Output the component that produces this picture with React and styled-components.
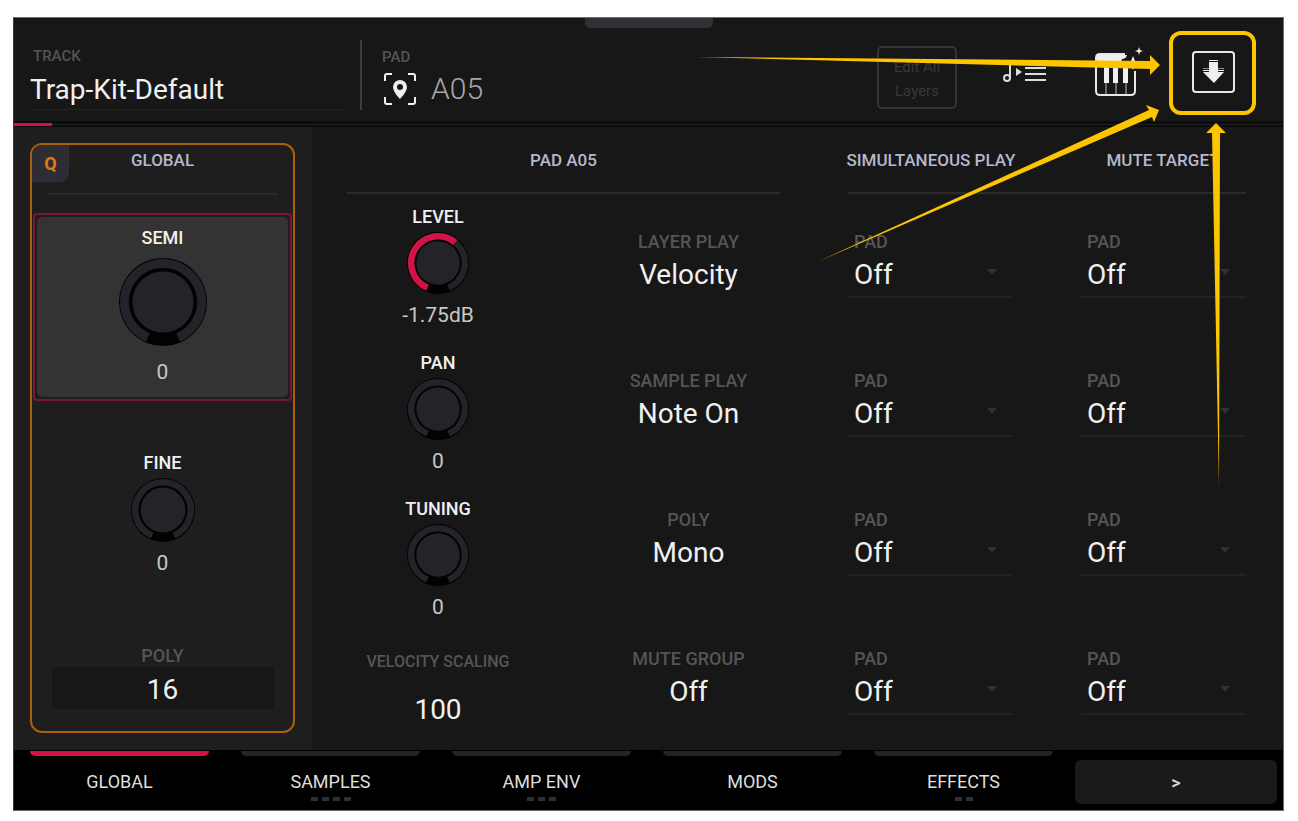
import React, { useState } from 'react';
import styled, { createGlobalStyle } from 'styled-components';

const GlobalStyle = createGlobalStyle`
    * {
        box-sizing: border-box;
    }
    body {
        margin: 0;
        background-color: #ffffff;
        font-family: Roboto, sans-serif;
        color: #f0f0f0;
    }
    button, input, select {
        font-family: inherit;
    }
    h2 {
        margin: 0;
    }
`

const Page = styled.div`
    padding: 17px 14px 10px 13px;
`

const Screen = styled.div`
    position: relative;
    border: 1px solid #6e6e6e;
    border-left-color: #3c3c3c;
    background-color: #171717;
    overflow: hidden;
`

const Handle = styled.div`
    position: absolute;
    top: 0;
    left: 50%;
    width: 128px;
    height: 10px;
    margin-left: -64px;
    background-color: #313036;
    border-radius: 0 0 5px 5px;
`

const Header = styled.header`
    height: 103px;
    padding: 22px 48px 11px 16px;
    display: flex;
    align-items: stretch;
`

const TrackField = styled.label`
    width: 316px;
    padding-top: 7px;
    display: flex;
    flex-direction: column;
    border-bottom: 1px solid #232323;
`

const Caption = styled.span`
    font-size: 15px;
    line-height: 18px;
    font-weight: 500;
    color: #555555;
    padding-left: ${props => props.$indent ? '3px' : '0'};
`

const TrackInput = styled.input`
    width: 100%;
    height: 42px;
    padding: 6px 0 0;
    border: 0;
    outline: none;
    background: transparent;
    color: #f0f0f0;
    font-size: 28px;
`

const PadField = styled.div`
    margin-left: 14px;
    padding: 7px 0 0 20px;
    border-left: 2px solid #3d3d3d;
`

const PadName = styled.div`
    display: flex;
    align-items: center;
    gap: 14px;
    padding: 5px 0 0 1px;
    font-size: 30px;
    line-height: 36px;
    font-weight: 300;
    color: #a8a8a8;
`

const Tools = styled.div`
    margin-left: auto;
    padding-bottom: 5px;
    display: flex;
    align-items: center;
`

const EditButton = styled.button`
    width: 80px;
    height: 63px;
    margin: 9px 46px 0 0;
    padding: 4px 14px 0;
    border: 2px solid #343434;
    border-radius: 5px;
    background: transparent;
    color: #383838;
    font-size: 15px;
    line-height: 24px;
`

const IconButton = styled.button`
    height: 54px;
    margin-left: ${props => props.$gap || 0}px;
    padding: 0;
    border: 0;
    background: transparent;
    display: flex;
    align-items: center;
`

const Progress = styled.div`
    height: 6px;
    padding: 2px 0 1px;
    background: linear-gradient(#0c0c0c 0 3px, #212121 3px 4px, #0c0c0c 4px);
`

const ProgressBar = styled.div`
    width: 3%;
    height: 3px;
    background-color: #d80f45;
`

const Body = styled.div`
    display: flex;
`

const Side = styled.aside`
    width: 298px;
    padding: 16px 17px 17px 16px;
    background-color: #1e1e1e;
`

const GlobalBox = styled.section`
    position: relative;
    height: 590px;
    padding: 0 1px;
    border: 2px solid #ad5e0a;
    border-radius: 12px;
    display: flex;
    flex-direction: column;
    align-items: center;
`

const QBadge = styled.span`
    position: absolute;
    top: 0;
    left: 0;
    width: 37px;
    height: 37px;
    border-radius: 9px 0 9px 0;
    background-color: #2d2d33;
    color: #e07a10;
    font-size: 18px;
    line-height: 38px;
    font-weight: 700;
    text-align: center;
`

const Title = styled.h2`
    height: 50px;
    padding-top: 5px;
    border-bottom: 2px solid #2b2b2b;
    font-size: 17px;
    line-height: 22px;
    font-weight: 500;
    color: #b6b8cc;
    text-align: center;
`

const SideTitle = styled(Title)`
    width: 230px;
    padding-top: 4px;
`

const Selected = styled.div`
    align-self: stretch;
    height: 188px;
    margin-top: 18px;
    padding: 2px;
    border: 2px solid #7a1733;
    border-radius: 4px;
`

const SelectedInner = styled.div`
    height: 100%;
    padding-top: 10px;
    border-radius: 5px;
    background-color: #333333;
`

const KnobBox = styled.label`
    display: flex;
    flex-direction: column;
    align-items: center;
    color: #f0f0f0;
    font-size: 18px;
    line-height: 22px;
    font-weight: 500;
`

const Dial = styled.span`
    position: relative;
    display: block;
    width: ${props => props.$size}px;
    height: ${props => props.$size}px;
    margin: ${props => props.$large ? '8px 0 13px' : '3px 0 8px'};
    svg {
        display: block;
    }
    input {
        position: absolute;
        inset: 0;
        width: 100%;
        height: 100%;
        margin: 0;
        opacity: 0;
    }
`

const KnobValue = styled.span`
    font-size: 21px;
    line-height: 24px;
    font-weight: 400;
    color: #c8c8c8;
`

const FineSlot = styled.div`
    margin-top: 51px;
`

const PolySlot = styled.label`
    width: 222px;
    margin-top: 70px;
    display: flex;
    flex-direction: column;
    align-items: center;
`

const Label = styled.span`
    display: block;
    font-size: ${props => props.$small ? '16px' : '18px'};
    line-height: 22px;
    font-weight: 500;
    color: #555555;
`

const NumberInput = styled.input`
    width: 100%;
    height: 42px;
    padding: 2px 0 0;
    border: 0;
    border-radius: 4px;
    outline: none;
    background-color: ${props => props.$filled ? '#171717' : 'transparent'};
    color: #f0f0f0;
    font-size: 28px;
    text-align: center;
`

const Main = styled.main`
    flex: 1;
    padding: 17px 37px 0 35px;
    display: grid;
    grid-template-columns: 433px 398px;
    justify-content: space-between;
    align-items: start;
`

const PadGrid = styled.div`
    display: grid;
    grid-template-columns: 182px 1fr;
    padding-top: 12px;
`

const KnobColumn = styled.div`
    display: flex;
    flex-direction: column;
    align-items: center;
    gap: 25px;
`

const ModeColumn = styled.div`
    padding: 25px 0 0 68px;
    display: flex;
    flex-direction: column;
    align-items: center;
    gap: 75px;
`

const Velocity = styled.label`
    width: 182px;
    display: flex;
    flex-direction: column;
    align-items: center;
    gap: 14px;
    padding-top: 7px;
`

const Mode = styled.label`
    width: 182px;
    text-align: center;
`

const ModeSelect = styled.select`
    width: 100%;
    height: 42px;
    padding: 0;
    border: 0;
    outline: none;
    appearance: none;
    background: transparent;
    color: #f0f0f0;
    font-size: 28px;
    text-align: center;
    text-align-last: center;
`

const TargetTitles = styled.div`
    display: flex;
    justify-content: space-between;
    border-bottom: 2px solid #2b2b2b;
`

const TargetTitle = styled(Title)`
    height: 48px;
    width: 166px;
    border: 0;
    display: flex;
    justify-content: center;
    white-space: nowrap;
`

const TargetGrid = styled.div`
    padding-top: 37px;
    display: grid;
    grid-template-columns: 165px 165px;
    justify-content: space-between;
    row-gap: 72px;
`

const Target = styled.label`
    position: relative;
    height: 67px;
    padding-left: 6px;
    border-bottom: 2px solid #222222;
    svg {
        position: absolute;
        right: 16px;
        top: 38px;
    }
`

const TargetSelect = styled(ModeSelect)`
    text-align: left;
    text-align-last: left;
`

const Tabs = styled.nav`
    height: 60px;
    padding: 1px 6px 6px 16px;
    background-color: #000000;
    display: grid;
    grid-template-columns: repeat(5, 1fr) 192px;
    column-gap: 32px;
`

const Tab = styled.button`
    padding: 0;
    border: 0;
    background: transparent;
    color: #dedede;
    font-size: 18px;
    line-height: 20px;
    display: flex;
    flex-direction: column;
    align-items: center;
    &::before {
        content: '';
        align-self: stretch;
        height: 5px;
        margin-bottom: 16px;
        border-radius: 0 0 5px 5px;
        background-color: ${props => props.$active ? '#d31245' : '#242329'};
    }
`

const Dots = styled.span`
    display: flex;
    gap: 4px;
    margin-top: 5px;
    i {
        width: 7px;
        height: 4px;
        background-color: #303034;
    }
`

const MoreButton = styled.button`
    height: 44px;
    margin: 9px 0 0 -10px;
    padding: 0;
    border: 0;
    border-radius: 6px;
    background-color: #1a1a1a;
    color: #dedede;
    font-size: 18px;
    font-weight: 500;
`

const Pointers = styled.svg`
    position: absolute;
    top: 0;
    right: 0;
    pointer-events: none;
`

function polar(c, r, deg) {
    const a = (deg * Math.PI) / 180;
    return `${c + r * Math.sin(a)} ${c - r * Math.cos(a)}`;
}

// the ring runs clockwise from 203 to 517 degrees, with the gap at the bottom
function arc(c, r, from, to) {
    return `M${polar(c, r, from)}A${r} ${r} 0 ${to - from > 180 ? 1 : 0} 1 ${polar(c, r, to)}`;
}

function Knob({ label, size = 64, large, text, min = -36, max = 36, start = 0, fill }) {
    const [value, setValue] = useState(start);
    const c = size / 2;
    const ring = size * 0.1;
    const r = c - 2 - ring / 2;

    return (
        <KnobBox>
            {label}
            <Dial $size={size} $large={large}>
                <svg width={size} height={size} aria-hidden='true'>
                    <circle cx={c} cy={c} r={c - 1} fill='#020203' />
                    <path d={arc(c, r, 203, 517)} fill='none' stroke='#242329' strokeWidth={ring} />
                    {fill && <path d={arc(c, r, 203, fill)} fill='none' stroke='#d31245' strokeWidth={ring} />}
                    <circle cx={c} cy={c} r={size * 0.34} fill='#242329' />
                </svg>
                <input type='range' min={min} max={max} step='any' value={value} onChange={e => setValue(e.target.value)} />
            </Dial>
            <KnobValue>{text || Math.round(value)}</KnobValue>
        </KnobBox>
    );
}

function PadTarget() {
    return (
        <Target>
            <Label>PAD</Label>
            <TargetSelect defaultValue='Off'>
                <option>Off</option>
            </TargetSelect>
            <svg width='10' height='7' aria-hidden='true'>
                <path d='M0 0h10L5 6z' fill='#303035' />
            </svg>
        </Target>
    );
}

function PadIcon() {
    return (
        <svg width='34' height='34' viewBox='0 0 34 34' fill='none' aria-hidden='true'>
            <path d='M2 9V4q0-2 2-2h5M25 2h5q2 0 2 2v5M32 25v5q0 2-2 2h-5M9 32H4q-2 0-2-2v-5' stroke='#f0f0f0' strokeWidth='2' />
            <path fillRule='evenodd' d='M17 8a7 7 0 0 0-7 7c0 5 7 12 7 12s7-7 7-12a7 7 0 0 0-7-7zm0 4a3 3 0 1 1 0 6 3 3 0 0 1 0-6z' fill='#f0f0f0' />
        </svg>
    );
}

function NoteListIcon() {
    return (
        <svg width='44' height='26' viewBox='0 0 44 26' fill='none' stroke='#dcdcdc' aria-hidden='true'>
            <circle cx='4' cy='18' r='3' strokeWidth='2' />
            <path d='M7 18V4' strokeWidth='2' />
            <path d='M22 8h21M22 14h21M22 20h21' strokeWidth='2' />
            <path d='M13 8l6 4-6 4z' fill='#dcdcdc' stroke='none' />
        </svg>
    );
}

function PianoIcon() {
    return (
        <svg width='50' height='52' viewBox='0 0 50 52' fill='none' aria-hidden='true'>
            <path d='M42 24V44q0 4-4 4H7q-4 0-4-4V11q0-4 4-4h25' stroke='#e8e8e8' strokeWidth='2' />
            <path d='M4 8h30q-1 4-5 4l-1 3 4 4H4z' fill='#f0f0f0' />
            <path d='M11 18h5v18h-5zM20 18h5v18h-5zM30 18h5v18h-5z' fill='#f0f0f0' />
            <path d='M13 36v12M23 36v12M33 36v12' stroke='#bdbdbd' />
            <path d='M40 9l2 5 5 2-5 2-2 5-2-5-5-2 5-2z' fill='#f0f0f0' />
            <path d='M46 0l1 3 3 1-3 1-1 3-1-3-3-1 3-1z' fill='#f0f0f0' />
        </svg>
    );
}

function DownloadIcon() {
    return (
        <svg width='44' height='44' viewBox='0 0 44 44' aria-hidden='true'>
            <rect x='2' y='1' width='41' height='40' rx='3' fill='none' stroke='#e8e8e8' strokeWidth='2' />
            <path d='M18 9h9v1h-9zM18 11h9v8h6v1h-6v1h6l-10 11-11-11h6v-1h-6v-1h6z' fill='#f0f0f0' />
            <path d='M12 17h21v1h-21z' fill='#8a8a8a' />
            <path d='M18 11h9v10h-9z' fill='#f0f0f0' />
        </svg>
    );
}

const modes = [
    ['LAYER PLAY', 'Velocity'],
    ['SAMPLE PLAY', 'Note On'],
    ['POLY', 'Mono'],
    ['MUTE GROUP', 'Off'],
];

const tabs = [
    { name: 'GLOBAL', dots: 0 },
    { name: 'SAMPLES', dots: 4 },
    { name: 'AMP ENV', dots: 3 },
    { name: 'MODS', dots: 0 },
    { name: 'EFFECTS', dots: 2 },
];

function App() {
    const [tab, setTab] = useState('GLOBAL');

    return (
        <Page>
            <GlobalStyle />
            <Screen>
                <Handle />
                <Header>
                    <TrackField>
                        <Caption $indent>TRACK</Caption>
                        <TrackInput defaultValue='Trap-Kit-Default' />
                    </TrackField>
                    <PadField>
                        <Caption>PAD</Caption>
                        <PadName><PadIcon />A05</PadName>
                    </PadField>
                    <Tools>
                        <EditButton>Edit All Layers</EditButton>
                        <IconButton aria-label='Note list'><NoteListIcon /></IconButton>
                        <IconButton $gap={46} aria-label='Keyboard'><PianoIcon /></IconButton>
                        <IconButton $gap={48} aria-label='Download'><DownloadIcon /></IconButton>
                    </Tools>
                </Header>
                <Progress><ProgressBar /></Progress>
                <Body>
                    <Side>
                        <GlobalBox>
                            <QBadge>Q</QBadge>
                            <SideTitle>GLOBAL</SideTitle>
                            <Selected>
                                <SelectedInner>
                                    <Knob label='SEMI' size={90} large />
                                </SelectedInner>
                            </Selected>
                            <FineSlot>
                                <Knob label='FINE' size={66} />
                            </FineSlot>
                            <PolySlot>
                                <Label>POLY</Label>
                                <NumberInput $filled defaultValue='16' />
                            </PolySlot>
                        </GlobalBox>
                    </Side>
                    <Main>
                        <section>
                            <Title>PAD A05</Title>
                            <PadGrid>
                                <KnobColumn>
                                    <Knob label='LEVEL' min={-60} max={6} start={-1.75} text='-1.75dB' fill={400} />
                                    <Knob label='PAN' />
                                    <Knob label='TUNING' />
                                    <Velocity>
                                        <Label $small>VELOCITY SCALING</Label>
                                        <NumberInput defaultValue='100' />
                                    </Velocity>
                                </KnobColumn>
                                <ModeColumn>
                                    {modes.map(([name, value]) => (
                                        <Mode key={name}>
                                            <Label>{name}</Label>
                                            <ModeSelect defaultValue={value}>
                                                <option>{value}</option>
                                            </ModeSelect>
                                        </Mode>
                                    ))}
                                </ModeColumn>
                            </PadGrid>
                        </section>
                        <section>
                            <TargetTitles>
                                <TargetTitle>SIMULTANEOUS PLAY</TargetTitle>
                                <TargetTitle>MUTE TARGET</TargetTitle>
                            </TargetTitles>
                            <TargetGrid>
                                {[0, 1, 2, 3, 4, 5, 6, 7].map(i => <PadTarget key={i} />)}
                            </TargetGrid>
                        </section>
                    </Main>
                </Body>
                <Tabs>
                    {tabs.map(({ name, dots }) => (
                        <Tab key={name} $active={tab === name} onClick={() => setTab(name)}>
                            {name}
                            <Dots>{Array.from({ length: dots }, (_, i) => <i key={i} />)}</Dots>
                        </Tab>
                    ))}
                    <MoreButton>&gt;</MoreButton>
                </Tabs>
                <Pointers width='600' height='500' viewBox='683 18 600 500' fill='#fdc500' aria-hidden='true'>
                    <rect x='1171' y='33' width='83' height='80' rx='10' fill='none' stroke='#fdc500' strokeWidth='4' />
                    <path d='M697 57L1150 61V55L1160 65L1150 75V69Z' />
                    <path d='M817 262L1149 110L1146 105L1159 110L1154 122L1152 117Z' />
                    <path d='M1219 486L1212 133H1206L1216 123L1226 133H1220Z' />
                </Pointers>
            </Screen>
        </Page>
    );
}

export default App;
